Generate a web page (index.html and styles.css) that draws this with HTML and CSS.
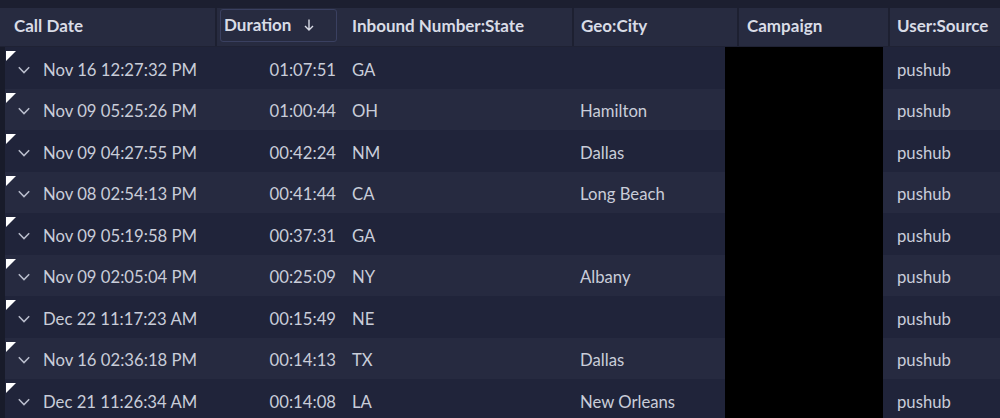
FILE: index.html
```html
<!DOCTYPE html>
<html>
<head>
<meta charset="utf-8">
<link rel="stylesheet" href="styles.css">
</head>
<body>
<div class="grid">
  <div class="head">
    <div class="hc h-date">Call Date</div>
    <div class="hc h-dur"><div class="sortbox">Duration <svg class="arrow" viewBox="0 0 10 12"><path d="M5 0.5 V11 M1 7 L5 11 L9 7"/></svg></div></div>
    <div class="hc h-state">Inbound Number:State</div>
    <div class="hc h-city">Geo:City</div>
    <div class="hc h-camp">Campaign</div>
    <div class="hc h-src">User:Source</div>
  </div>
  <div class="rows">
    <div class="row odd"><div class="c date"><span class="flag"></span><svg class="chev" viewBox="0 0 12 8"><path d="M0.8 1.2 L6 6.6 L11.2 1.2"/></svg>Nov 16 12:27:32 PM</div><div class="c dur">01:07:51</div><div class="c state">GA</div><div class="c city"></div><div class="c camp"></div><div class="c src">pushub</div></div>
    <div class="row even"><div class="c date"><span class="flag"></span><svg class="chev" viewBox="0 0 12 8"><path d="M0.8 1.2 L6 6.6 L11.2 1.2"/></svg>Nov 09 05:25:26 PM</div><div class="c dur">01:00:44</div><div class="c state">OH</div><div class="c city">Hamilton</div><div class="c camp"></div><div class="c src">pushub</div></div>
    <div class="row odd"><div class="c date"><span class="flag"></span><svg class="chev" viewBox="0 0 12 8"><path d="M0.8 1.2 L6 6.6 L11.2 1.2"/></svg>Nov 09 04:27:55 PM</div><div class="c dur">00:42:24</div><div class="c state">NM</div><div class="c city">Dallas</div><div class="c camp"></div><div class="c src">pushub</div></div>
    <div class="row even"><div class="c date"><span class="flag"></span><svg class="chev" viewBox="0 0 12 8"><path d="M0.8 1.2 L6 6.6 L11.2 1.2"/></svg>Nov 08 02:54:13 PM</div><div class="c dur">00:41:44</div><div class="c state">CA</div><div class="c city">Long Beach</div><div class="c camp"></div><div class="c src">pushub</div></div>
    <div class="row odd"><div class="c date"><span class="flag"></span><svg class="chev" viewBox="0 0 12 8"><path d="M0.8 1.2 L6 6.6 L11.2 1.2"/></svg>Nov 09 05:19:58 PM</div><div class="c dur">00:37:31</div><div class="c state">GA</div><div class="c city"></div><div class="c camp"></div><div class="c src">pushub</div></div>
    <div class="row even"><div class="c date"><span class="flag"></span><svg class="chev" viewBox="0 0 12 8"><path d="M0.8 1.2 L6 6.6 L11.2 1.2"/></svg>Nov 09 02:05:04 PM</div><div class="c dur">00:25:09</div><div class="c state">NY</div><div class="c city">Albany</div><div class="c camp"></div><div class="c src">pushub</div></div>
    <div class="row odd"><div class="c date"><span class="flag"></span><svg class="chev" viewBox="0 0 12 8"><path d="M0.8 1.2 L6 6.6 L11.2 1.2"/></svg>Dec 22 11:17:23 AM</div><div class="c dur">00:15:49</div><div class="c state">NE</div><div class="c city"></div><div class="c camp"></div><div class="c src">pushub</div></div>
    <div class="row even"><div class="c date"><span class="flag"></span><svg class="chev" viewBox="0 0 12 8"><path d="M0.8 1.2 L6 6.6 L11.2 1.2"/></svg>Nov 16 02:36:18 PM</div><div class="c dur">00:14:13</div><div class="c state">TX</div><div class="c city">Dallas</div><div class="c camp"></div><div class="c src">pushub</div></div>
    <div class="row odd"><div class="c date"><span class="flag"></span><svg class="chev" viewBox="0 0 12 8"><path d="M0.8 1.2 L6 6.6 L11.2 1.2"/></svg>Dec 21 11:26:34 AM</div><div class="c dur">00:14:08</div><div class="c state">LA</div><div class="c city">New Orleans</div><div class="c camp"></div><div class="c src">pushub</div></div>
  </div>
</div>
</body>
</html>
```
FILE: styles.css
```css
html, body {
  margin: 0;
  padding: 0;
  background: #1c1f30;
  overflow: hidden;
}
body {
  width: 1000px;
  height: 418px;
  font-family: Lato, "Noto Sans", sans-serif;
}
.grid {
  padding-top: 8px;
}
.head {
  display: flex;
  height: 38px;
  background: #272b40;
  color: #d9dce6;
  font-size: 17px;
  font-weight: 700;
  border-bottom: 1px solid #1f2234;
}
.hc {
  display: flex;
  align-items: center;
  box-sizing: border-box;
  height: 100%;
  padding-bottom: 3px;
  border-left: 2px solid #1d2031;
}
.h-date { width: 215px; padding-left: 14px; border-left: none; }
.h-dur { width: 125px; padding: 1px 3px 4px 3px; }
.sortbox {
  flex: 1;
  height: 100%;
  box-sizing: border-box;
  border: 1px solid #3a4060;
  border-radius: 3px;
  display: flex;
  align-items: center;
  padding-left: 3px;
  padding-bottom: 2px;
}
.arrow {
  width: 10px;
  height: 12px;
  margin-left: 13px;
  fill: none;
  stroke: #d9dce6;
  stroke-width: 1.4;
}
.h-state { width: 232px; padding-left: 10px; border-left-color: #272b40; }
.h-city { width: 165px; padding-left: 7px; }
.h-camp { width: 151px; padding-left: 8px; }
.h-src { flex: 1; padding-left: 7px; }

.row {
  display: grid;
  grid-template-columns: 216px 124px 230px 155px 158px 1fr;
  height: 41.5px;
  color: #c9cdd9;
  font-size: 16.7px;
}
.row.odd { background: #20243a; }
.row.even { background: #262a40; }
.c {
  display: flex;
  align-items: center;
  padding-top: 4px;
  box-sizing: border-box;
  white-space: nowrap;
}
.date {
  position: relative;
  padding-left: 13px;
  border-left: 5px solid #181b2a;
}
.flag {
  position: absolute;
  left: 1px;
  top: 4px;
  width: 0;
  height: 0;
  border-top: 10px solid #ffffff;
  border-right: 10px solid transparent;
}
.chev {
  width: 12px;
  height: 8px;
  margin-right: 13px;
  fill: none;
  stroke: #b9bdcc;
  stroke-width: 1.5;
}
.dur { justify-content: flex-end; padding-right: 4px; }
.state { padding-left: 12px; }
.city { padding-left: 10px; }
.camp { background: #000; }
.src { padding-left: 14px; }
```
